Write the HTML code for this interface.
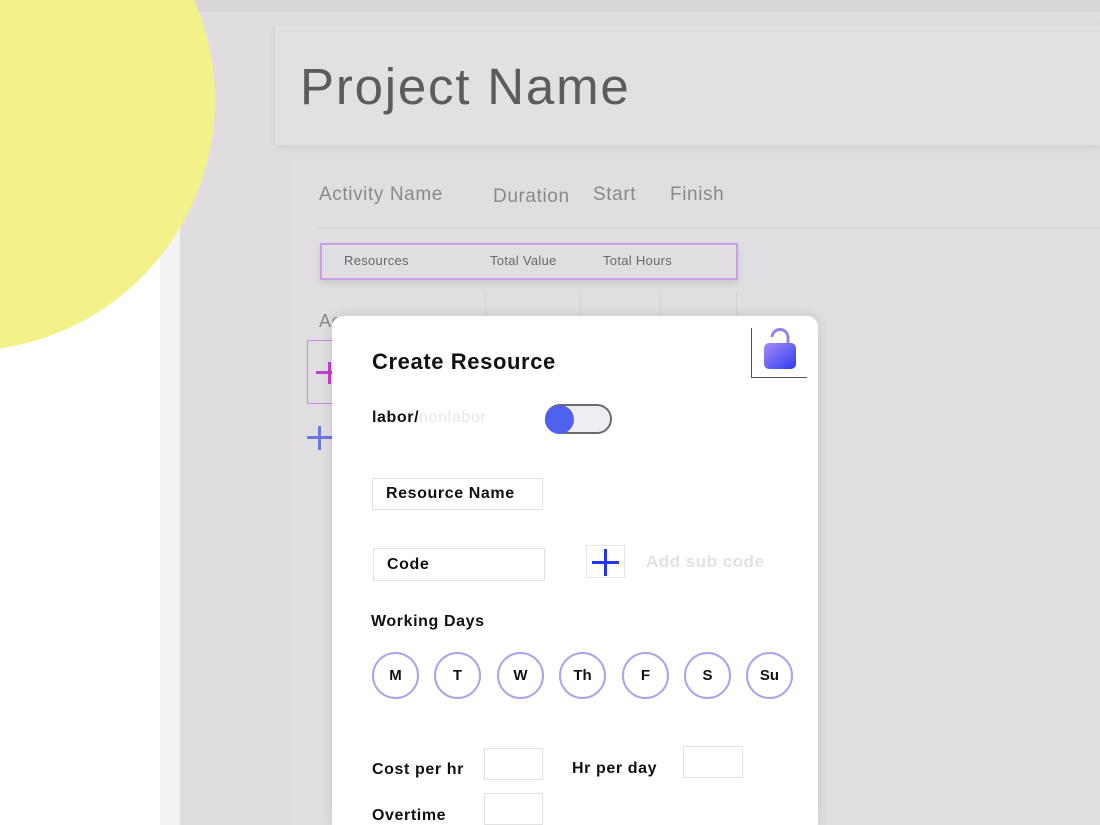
<!DOCTYPE html>
<html><head><style>
*{margin:0;padding:0;box-sizing:border-box}
html,body{width:1100px;height:825px;overflow:hidden}
body{background:#fff;position:relative;font-family:"Liberation Sans",sans-serif}
.abs{position:absolute}
.g{color:#8a888c;letter-spacing:0.6px}
.b{color:#111;font-weight:bold;letter-spacing:0.6px}
.inp{position:absolute;border:1.5px solid #e2e2e4;background:#fff;font-weight:bold;font-size:16px;color:#111;padding-left:13px;display:flex;align-items:center;letter-spacing:0.6px}
.day{position:absolute;top:652px;width:47px;height:47px;border-radius:50%;border:2px solid #a9a3f0;display:flex;align-items:center;justify-content:center;font-weight:bold;font-size:15px;color:#111;background:#fff}
</style></head><body>
<div class="abs" style="left:160px;top:0;width:20px;height:825px;background:#f3f2f5"></div>
<div class="abs" style="left:180px;top:0;width:920px;height:825px;background:#dfdde0"></div>
<div class="abs" style="left:180px;top:0;width:920px;height:12px;background:#d8d6d9"></div>
<div class="abs" style="left:-287px;top:-151px;width:502px;height:502px;border-radius:50%;background:#f3f18a"></div>
<div class="abs" style="left:275px;top:25px;width:825px;height:120px;background:#e2e0e3;box-shadow:0 2px 8px rgba(0,0,0,.06)"></div>
<div class="abs" style="left:300px;top:57px;font-size:51px;color:#5c5b5e;letter-spacing:1.8px">Project Name</div>
<div class="abs" style="left:292px;top:160px;width:808px;height:665px;background:#e0dee1"></div>
<div class="abs g" style="left:319px;top:184px;font-size:19px">Activity Name</div>
<div class="abs g" style="left:493px;top:186px;font-size:19px">Duration</div>
<div class="abs g" style="left:593px;top:184px;font-size:19px">Start</div>
<div class="abs g" style="left:670px;top:184px;font-size:19px">Finish</div>
<div class="abs" style="left:318px;top:228px;width:782px;height:1px;background:#d6d4d7"></div>
<div class="abs" style="left:320px;top:243px;width:418px;height:37px;border:2px solid #c9a0e6;background:#e0dee1;box-shadow:0 3px 6px rgba(0,0,0,.1)"></div>
<div class="abs" style="left:344px;top:253px;font-size:13px;color:#6a686c;letter-spacing:0.3px">Resources</div>
<div class="abs" style="left:490px;top:253px;font-size:13px;color:#6a686c;letter-spacing:0.3px">Total Value</div>
<div class="abs" style="left:603px;top:253px;font-size:13px;color:#6a686c;letter-spacing:0.3px">Total Hours</div>
<div class="abs" style="left:485px;top:292px;width:1px;height:30px;background:#d3d1d4"></div>
<div class="abs" style="left:580px;top:292px;width:1px;height:30px;background:#d3d1d4"></div>
<div class="abs" style="left:660px;top:292px;width:1px;height:30px;background:#d3d1d4"></div>
<div class="abs" style="left:736px;top:292px;width:1px;height:30px;background:#d3d1d4"></div>
<div class="abs g" style="left:319px;top:311px;font-size:18px">Ac</div>
<div class="abs" style="left:307px;top:340px;width:30px;height:64px;border:1.5px solid #c58be0"></div>
<div class="abs" style="left:316px;top:371px;width:16px;height:3px;background:#c040d0"></div>
<div class="abs" style="left:328px;top:362px;width:3px;height:22px;background:#c040d0"></div>
<div class="abs" style="left:307px;top:436px;width:25px;height:3px;background:#6a78e8"></div>
<div class="abs" style="left:318px;top:426px;width:3px;height:24px;background:#6a78e8"></div>
<div class="abs" style="left:332px;top:316px;width:486px;height:509px;background:#fff;border-radius:11px 11px 0 0;box-shadow:0 0 12px rgba(0,0,0,.12)"></div>
<div class="abs b" style="left:372px;top:349px;font-size:22px">Create Resource</div>
<div class="abs" style="left:751px;top:328px;width:56px;height:50px;border-left:1.5px solid #555;border-bottom:1.5px solid #555"></div>
<svg class="abs" style="left:760px;top:328px" width="42" height="46" viewBox="0 0 42 46">
<defs><linearGradient id="lg" x1="0" y1="0" x2="1" y2="1"><stop offset="0" stop-color="#a58cf5"/><stop offset="1" stop-color="#2f3df0"/></linearGradient></defs>
<path d="M12 9 A8 8 0 0 1 28 10 V16" fill="none" stroke="#8f86f5" stroke-width="3"/>
<rect x="4" y="15" width="32" height="26" rx="5" fill="url(#lg)"/>
</svg>
<div class="abs b" style="left:372px;top:409px;font-size:16px">labor/<span style="color:#e6e6e8;font-weight:normal">nonlabor</span></div>
<div class="abs" style="left:545px;top:404px;width:67px;height:30px;border-radius:15px;border:2.5px solid #6b6b6e;background:#eeeef2"></div>
<div class="abs" style="left:545px;top:405px;width:29px;height:29px;border-radius:50%;background:#4f62ef"></div>
<div class="inp" style="left:372px;top:478px;width:171px;height:32px">Resource Name</div>
<div class="inp" style="left:373px;top:548px;width:172px;height:33px">Code</div>
<div class="abs" style="left:586px;top:545px;width:39px;height:33px;border:1.5px solid #e6e6e8"></div>
<div class="abs" style="left:592px;top:561px;width:27px;height:3px;background:#2236ea"></div>
<div class="abs" style="left:604px;top:549px;width:3px;height:27px;background:#2236ea"></div>
<div class="abs" style="left:646px;top:552px;font-size:17px;color:#e2e2e4;font-weight:bold;letter-spacing:0.5px">Add sub code</div>
<div class="abs b" style="left:371px;top:613px;font-size:16px">Working Days</div>
<div class="day" style="left:372px">M</div>
<div class="day" style="left:434px">T</div>
<div class="day" style="left:497px">W</div>
<div class="day" style="left:559px">Th</div>
<div class="day" style="left:622px">F</div>
<div class="day" style="left:684px">S</div>
<div class="day" style="left:746px">Su</div>
<div class="abs b" style="left:372px;top:761px;font-size:16px">Cost per hr</div>
<div class="inp" style="left:484px;top:748px;width:59px;height:32px"></div>
<div class="abs b" style="left:572px;top:760px;font-size:16px">Hr per day</div>
<div class="inp" style="left:683px;top:746px;width:60px;height:32px"></div>
<div class="abs b" style="left:372px;top:807px;font-size:16px">Overtime</div>
<div class="inp" style="left:484px;top:793px;width:59px;height:32px"></div>
</body></html>
